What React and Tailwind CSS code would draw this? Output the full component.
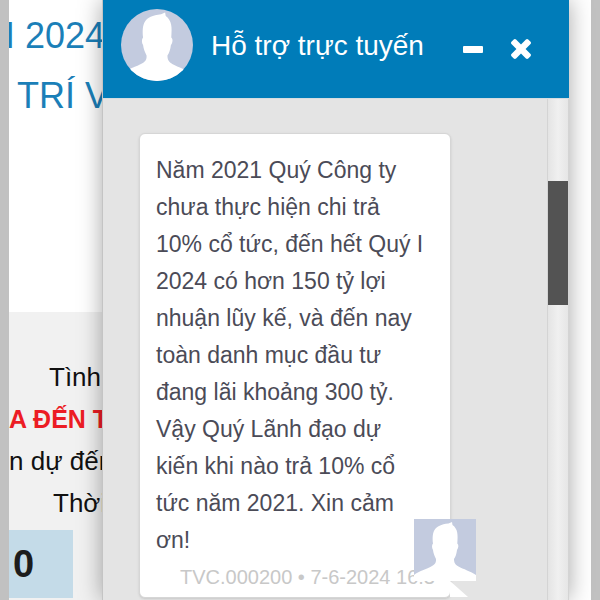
const MESSAGE =
  'Năm 2021 Quý Công ty chưa thực hiện chi trả 10% cổ tức, đến hết Quý I 2024 có hơn 150 tỷ lợi nhuận lũy kế, và đến nay toàn danh mục đầu tư đang lãi khoảng 300 tỷ. Vậy Quý Lãnh đạo dự kiến khi nào trả 10% cổ tức năm 2021. Xin cảm ơn!';

function Avatar({ className }) {
  return (
    <svg className={className} viewBox="0 0 62 62" aria-hidden="true">
      <rect width="62" height="62" fill="#c3cbdf" />
      <path
        fill="#fff"
        d="M0 62V56C5 52 14 49.500 18 47C21.500 45 22.200 43 22 40C20.500 37 19.300 34 19 31C17.700 29 17.700 26 19 24.500C18 13 19.500 6 34.500 4.500L38 3L38.500 6C44 10 44 16 43.300 24.500C45 26 44.500 29 43 31C42.500 35 41.500 38 40 40C40 43.500 41 45.500 44.500 47.500C49 50 57 52.500 62 56V62Z"
      />
    </svg>
  );
}

function CloseIcon() {
  return (
    <svg className="size-5" viewBox="110 366 1188 1188" fill="currentColor" aria-hidden="true">
      <path d="M1298 1322q0 40-28 68l-136 136q-28 28-68 28t-68-28l-294-294-294 294q-28 28-68 28t-68-28l-136-136q-28-28-28-68t28-68l294-294-294-294q-28-28-28-68t28-68l136-136q28-28 68-28t68 28l294 294 294-294q28-28 68-28t68 28l136 136q28 28 28 68t-28 68l-294 294 294 294q28 28 28 68z" />
    </svg>
  );
}

function MinusIcon() {
  return (
    <svg className="size-5" viewBox="0 0 20 20" fill="currentColor" aria-hidden="true">
      <rect y="7" width="20" height="7" rx="1" />
    </svg>
  );
}

function Page() {
  return (
    <main className="min-h-screen overflow-hidden whitespace-nowrap bg-white">
      <h1 className="h-78 pt-1.5 text-4xl leading-[60px] text-[#1b7fb8]">
        <span className="-ml-1 block">I 2024</span>
        <span className="block pl-2">TRÍ VIỆT</span>
      </h1>
      <section className="mr-12 min-h-72 bg-[#f1f1f1] pt-11 text-[26px] leading-[42px] text-[#111]">
        <p className="pl-10">Tình</p>
        <p className="text-[25px] leading-[42px] font-bold text-[#ec1c24]">A ĐẾN T</p>
        <p>n dự đến</p>
        <p className="pl-11">Thời</p>
        <div className="mt-1.5 flex h-17 w-16 items-center bg-[#c4dbe8] pl-1 text-[38px] font-bold text-[#1c1c1c]">0</div>
      </section>
    </main>
  );
}

function ChatHeader() {
  return (
    <header className="flex h-[98px] shrink-0 items-center bg-[#007cb9] pr-[38px] pb-2 pl-[18px] text-white">
      <Avatar className="size-18 shrink-0 rounded-full" />
      <h2 className="grow pt-0.5 pl-[18px] text-[28px] whitespace-nowrap">Hỗ trợ trực tuyến</h2>
      <div className="flex gap-7 pt-2">
        <button type="button" aria-label="Thu nhỏ"><MinusIcon /></button>
        <button type="button" aria-label="Đóng"><CloseIcon /></button>
      </div>
    </header>
  );
}

function Message() {
  return (
    <article className="relative mt-[34px] mr-24 ml-9 rounded-md border border-[#d6d6d6] bg-white pt-[18px] pr-6 pb-1.5 pl-4 shadow-sm">
      <p className="text-[23px] leading-[37px] text-[#4b4b57]">{MESSAGE}</p>
      <p className="pt-1 pl-6 text-xl whitespace-nowrap text-[#c8c8c8]">TVC.000200 • 7-6-2024 16:3</p>
      <Avatar className="absolute -right-[26px] bottom-4 size-[62px]" />
      <svg className="absolute -right-5 bottom-0 h-4 w-5" viewBox="0 0 20 16" aria-hidden="true">
        <path d="M0 0L18 16H0Z" fill="#fff" />
      </svg>
    </article>
  );
}

export default function App() {
  return (
    <div className="relative h-screen overflow-hidden bg-[#c1c1c1] px-[9px] font-['Liberation_Sans',Arial,sans-serif]">
      <Page />
      <aside className="absolute inset-y-0 right-[31px] left-[102px] flex flex-col border-l border-[#c4c4c4] shadow-[0_0_22px_rgba(0,0,0,0.35)]">
        <ChatHeader />
        <div className="flex min-h-0 grow border-t border-[#d5dde1] bg-[#e4e4e4]">
          <div className="min-w-0 grow overflow-hidden">
            <Message />
          </div>
          <div className="w-[22px] shrink-0 border-x border-[#d4d4d4] bg-linear-to-r from-[#e4e4e4] via-[#f0f0f0] to-[#e6e6e6] pt-[82px]">
            <div className="h-31 bg-[#535353]" />
          </div>
        </div>
      </aside>
    </div>
  );
}
